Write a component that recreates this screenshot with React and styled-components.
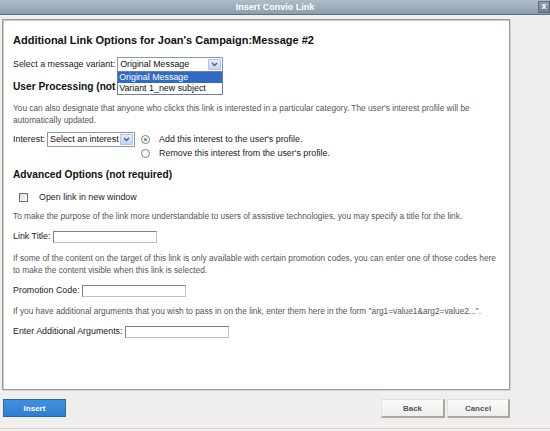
import React from "react";
import styled, { createGlobalStyle } from "styled-components";

const Global = createGlobalStyle`
  html, body { margin: 0; padding: 0; }
  body {
    background: #f0efed;
    font-family: "Liberation Sans", Arial, sans-serif;
    width: 550px;
    height: 431px;
    overflow: hidden;
  }
`;

const Frame = styled.div`
  width: 550px;
  height: 428px;
  display: flex;
  flex-direction: column;
  background: #f0efed;
  border-bottom: 1px solid #d8cfc8;
`;

const TitleBar = styled.div`
  position: relative;
  height: 14px;
  background: linear-gradient(#b0bdca, #8c9db0);
  border-bottom: 1px solid #5e6e80;
  display: flex;
  align-items: center;
  justify-content: center;
  color: #fff;
  font-weight: bold;
  font-size: 9px;
`;

const Close = styled.div`
  position: absolute;
  right: 0;
  top: 1px;
  width: 10px;
  height: 10px;
  background: linear-gradient(#8f9fb0, #6f8193);
  border: 1px solid #5b6b7c;
  color: #fff;
  font-size: 9px;
  font-weight: bold;
  line-height: 9px;
  text-align: center;
`;

const Body = styled.div`
  display: flex;
  flex-direction: column;
  align-items: flex-start;
  padding: 4px 0 0 2px;
`;

const Panel = styled.div`
  width: 508px;
  height: 371px;
  box-sizing: border-box;
  background: #fff;
  border: 1px solid #9c9c94;
  box-shadow: inset 1px 1px 0 #c9c7bf, 1px 1px 0 #d6d4cc;
  padding: 13px 10px 0 10px;
  color: #222;
`;

const Heading = styled.div`
  font-weight: bold;
  font-size: ${p => (p.$main ? 11 : 10.2)}px;
  color: #111;
  margin-top: ${p => p.$mt || 0}px;
  line-height: 14px;
  white-space: nowrap;
`;

const Row = styled.div`
  display: flex;
  align-items: ${p => p.$align || "center"};
  font-size: 8.9px;
  color: #222;
  margin-top: ${p => p.$mt || 0}px;
  height: 15px;
  line-height: 15px;
`;

const Label = styled.span`
  margin-right: 2px;
  white-space: nowrap;
`;

const Note = styled.div`
  font-size: 8.3px;
  line-height: 12px;
  color: #555;
  margin-top: ${p => p.$mt || 0}px;
`;

const SelectWrap = styled.div`
  position: relative;
`;

const Select = styled.div`
  width: ${p => p.$w}px;
  height: 15px;
  box-sizing: border-box;
  border: 1px solid #7f9db9;
  display: flex;
  align-items: center;
  justify-content: space-between;
  font-size: 8.9px;
  color: #111;
  padding-left: 2px;
  background: #fff;
  white-space: nowrap;
  overflow: hidden;
`;

const Arrow = styled.div`
  flex: none;
  width: 13px;
  height: 11px;
  margin-right: 1px;
  background: linear-gradient(#e3ecfb, #c3d5f3);
  border: 1px solid #b4c7ea;
  box-sizing: border-box;
  display: flex;
  align-items: center;
  justify-content: center;
`;

const DropList = styled.div`
  position: absolute;
  left: 0;
  top: 14px;
  width: 106px;
  box-sizing: border-box;
  border: 1px solid #6b7f9e;
  background: #fff;
  font-size: 8.9px;
  z-index: 2;
`;

const Option = styled.div`
  height: 11px;
  line-height: 11px;
  padding-left: 1px;
  white-space: nowrap;
  background: ${p => (p.$sel ? "#3169c6" : "#fff")};
  color: ${p => (p.$sel ? "#fff" : "#111")};
`;

const RadioGroup = styled.div`
  display: flex;
  flex-direction: column;
  gap: 2px;
  margin-left: 6px;
  margin-top: 1px;
`;

const RadioRow = styled.div`
  display: flex;
  align-items: center;
  gap: 9px;
  font-size: 8.9px;
  line-height: 12px;
  white-space: nowrap;
`;

const Radio = styled.span`
  width: 7px;
  height: 7px;
  border-radius: 50%;
  border: 1px solid #7a7a7a;
  background: #fff;
  display: flex;
  align-items: center;
  justify-content: center;
  &::after {
    content: "";
    width: 3px;
    height: 3px;
    border-radius: 50%;
    background: ${p => (p.$on ? "#3aa53e" : "transparent")};
  }
`;

const Check = styled.span`
  width: 7px;
  height: 7px;
  border: 1px solid #707070;
  background: linear-gradient(135deg, #dcdcd6, #fff);
  margin: 0 11px 0 6px;
`;

const Input = styled.div`
  width: ${p => p.$w}px;
  height: 12px;
  border: 1px solid #7f7f7f;
  border-right-color: #c0c0c0;
  border-bottom-color: #c0c0c0;
  background: #fff;
  box-sizing: border-box;
`;

const Footer = styled.div`
  width: 508px;
  display: flex;
  align-items: flex-start;
  padding: 9px 0 0 1px;
  box-sizing: border-box;
`;

const PrimaryBtn = styled.div`
  width: 63px;
  height: 18px;
  background: linear-gradient(#4191e2, #2f7dd0);
  border: 1px solid #2a6aaf;
  box-sizing: border-box;
  color: #fff;
  font-weight: bold;
  font-size: 8px;
  display: flex;
  align-items: center;
  justify-content: center;
`;

const Spacer = styled.div`
  flex: 1;
`;

const Btn = styled.div`
  width: ${p => p.$w}px;
  height: 19px;
  box-sizing: border-box;
  background: linear-gradient(#fbfbfa, #efeeec);
  border: 1px solid #e4e2dd;
  border-right: 2px solid #aaa89f;
  border-bottom: 2px solid #aaa89f;
  color: #555;
  font-weight: bold;
  font-size: 8px;
  display: flex;
  align-items: center;
  justify-content: center;
  margin-left: ${p => p.$ml || 0}px;
`;

const Chevron = () => (
  <svg width="7" height="5" viewBox="0 0 7 5">
    <path d="M1 1 L3.5 3.5 L6 1" fill="none" stroke="#4d6185" strokeWidth="1.4" />
  </svg>
);

export default function App() {
  return (
    <>
      <Global />
      <Frame>
        <TitleBar>
          Insert Convio Link
          <Close>x</Close>
        </TitleBar>
        <Body>
          <Panel>
            <Heading $main>Additional Link Options for Joan's Campaign:Message #2</Heading>
            <Row $mt={10}>
              <Label>Select a message variant:</Label>
              <SelectWrap>
                <Select $w={106}>
                  Original Message
                  <Arrow><Chevron /></Arrow>
                </Select>
                <DropList>
                  <Option $sel>Original Message</Option>
                  <Option>Variant 1_new subject</Option>
                </DropList>
              </SelectWrap>
            </Row>
            <Heading $mt={8}>User Processing (not required)</Heading>
            <Note $mt={8}>
              You can also designate that anyone who clicks this link is interested in a particular category. The user's interest profile will be automatically updated.
            </Note>
            <Row $mt={6} $align="flex-start">
              <Label>Interest:</Label>
              <Select $w={88}>
                Select an interest
                <Arrow><Chevron /></Arrow>
              </Select>
              <RadioGroup>
                <RadioRow><Radio $on />Add this interest to the user's profile.</RadioRow>
                <RadioRow><Radio />Remove this interest from the user's profile.</RadioRow>
              </RadioGroup>
            </Row>
            <Heading $mt={21}>Advanced Options (not required)</Heading>
            <Row $mt={8}>
              <Check />
              Open link in new window
            </Row>
            <Note $mt={5}>
              To make the purpose of the link more understandable to users of assistive technologies, you may specify a title for the link.
            </Note>
            <Row $mt={7}>
              <Label>Link Title:</Label>
              <Input $w={104} />
            </Row>
            <Note $mt={8}>
              If some of the content on the target of this link is only available with certain promotion codes, you can enter one of those codes here to make the content visible when this link is selected.
            </Note>
            <Row $mt={7}>
              <Label>Promotion Code:</Label>
              <Input $w={104} />
            </Row>
            <Note $mt={7}>
              If you have additional arguments that you wish to pass in on the link, enter them here in the form "arg1=value1&amp;arg2=value2...".
            </Note>
            <Row $mt={7}>
              <Label>Enter Additional Arguments:</Label>
              <Input $w={104} />
            </Row>
          </Panel>
          <Footer>
            <PrimaryBtn>Insert</PrimaryBtn>
            <Spacer />
            <Btn $w={64}>Back</Btn>
            <Btn $w={63} $ml={2}>Cancel</Btn>
          </Footer>
        </Body>
      </Frame>
    </>
  );
}
